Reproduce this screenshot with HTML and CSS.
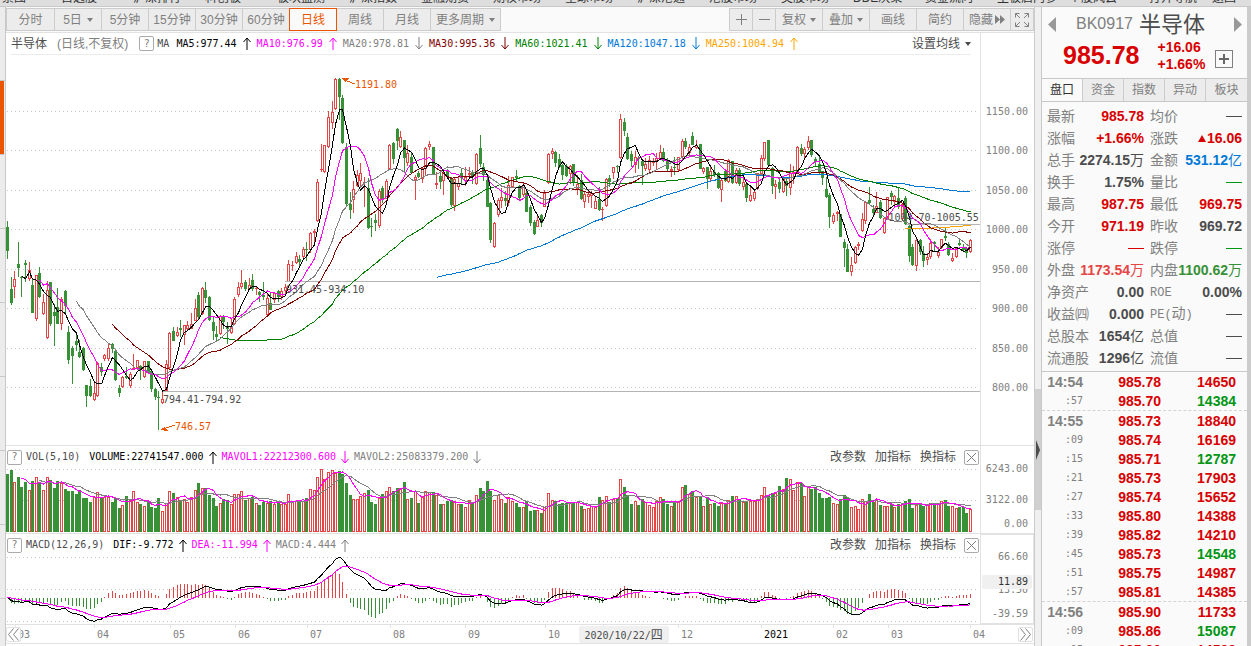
FILE: index.html
```html
<!DOCTYPE html>
<html lang="zh-CN">
<head>
<meta charset="utf-8">
<title>半导体 BK0917 日线</title>
<link rel="stylesheet" href="styles.css">
</head>
<body>
<svg class="defs" aria-hidden="true">
  <symbol id="up" viewBox="0 0 8 13"><path d="M4 13V1M0.5 5L4 1L7.500 5"/></symbol>
  <symbol id="down" viewBox="0 0 8 13"><path d="M4 0V12M0.5 8L4 12L7.500 8"/></symbol>
</svg>
<div class="app">
  <nav class="topnav">
    <a href="#">景图</a><a href="#">自选股</a><a href="#">沪深排行</a><a href="#">科创板</a><a href="#">板块监测</a><a href="#">沪深指数</a><a href="#">金融期货</a><a href="#">期权市场</a><a href="#">全球市场</a><a href="#">沪深港通</a><a href="#">港股市场</a><a href="#">美股市场</a><a href="#">DDE决策</a><a href="#">资金流向</a><a href="#">主板启内参</a><a href="#" class="wide">个股风云</a><a href="#" class="mid">打开导航</a><a href="#">返回</a>
  </nav>
  <div class="work">
    <aside class="rail"><i></i><i class="on"></i><i></i><i></i><i></i><i></i><i></i><i></i><i></i></aside>
    <main class="main">
      <div class="toolbar">
        <div class="group">
          <button>分时</button><button>5日<b class="caret"></b></button><button>5分钟</button><button>15分钟</button><button>30分钟</button><button>60分钟</button><button class="active">日线</button><button>周线</button><button>月线</button><button class="more">更多周期<b class="caret"></b></button>
        </div>
        <div class="group tools">
          <button class="small" aria-label="放大"><svg width="11" height="11"><path d="M0 5.500H11M5.500 0V11"/></svg></button><button class="small" aria-label="缩小"><svg width="11" height="11"><path d="M0 5.500H11"/></svg></button><button>复权<b class="caret"></b></button><button>叠加<b class="caret"></b></button><button>画线</button><button>简约</button><button>隐藏<svg width="10" height="9" class="solid"><path d="M0 0L5 4.500L0 9ZM5 0L10 4.500L5 9Z"/></svg></button><button class="small" aria-label="全屏"><svg width="14" height="14"><path d="M.5 4.500V.5H4.500M.5.5L5 5M9.500.5H13.500V4.500M13.500.5L9 5M.5 9.500V13.500H4.500M.5 13.500L5 9M9.500 13.500H13.500V9.500M13.500 13.500L9 9"/></svg></button>
        </div>
      </div>

      <section class="pane price">
        <div class="plot">
          <header class="legend ruled">
            <span class="cn dark">半导体</span><span class="cn sub">(日线,不复权)</span><button class="box">?</button><span class="dark ma">MA</span>
            <span class="c-black">MA5:977.44</span><svg class="arrow c-black"><use href="#up"/></svg>
            <span class="c-pink">MA10:976.99</span><svg class="arrow c-pink"><use href="#up"/></svg>
            <span class="c-gray">MA20:978.81</span><svg class="arrow c-gray"><use href="#down"/></svg>
            <span class="c-brown">MA30:995.36</span><svg class="arrow c-brown"><use href="#down"/></svg>
            <span class="c-green">MA60:1021.41</span><svg class="arrow c-green"><use href="#down"/></svg>
            <span class="c-blue">MA120:1047.18</span><svg class="arrow c-blue"><use href="#down"/></svg>
            <span class="c-gold">MA250:1004.94</span><svg class="arrow c-gold"><use href="#up"/></svg>
            <button class="link">设置均线<b class="caret"></b></button>
          </header>
          <div class="canvas">
            <svg id="price" viewBox="6 55 974 390" preserveAspectRatio="none"></svg>
            <span class="note hot" style="left:35.83%;top:6.2%">1191.80</span>
            <span class="note hot" style="left:17.35%;top:93.9%">746.57</span>
            <span class="note" style="left:28.75%;top:58.8%">931.45-934.10</span>
            <span class="note" style="left:16.12%;top:87%">794.41-794.92</span>
            <span class="note" style="left:90.6%;top:40.3%">1004.70-1005.55</span>
          </div>
        </div>
        <div class="axis price-axis"><span>1150.00</span><span>1100.00</span><span>1050.00</span><span>1000.00</span><span>950.00</span><span>900.00</span><span>850.00</span><span>800.00</span></div>
      </section>

      <section class="pane volume">
        <div class="plot">
          <header class="legend tight">
            <button class="box">?</button><span class="dark name">VOL(5,10)</span>
            <span class="c-black">VOLUME:22741547.000</span><svg class="arrow c-black"><use href="#up"/></svg>
            <span class="c-pink">MAVOL1:22212300.600</span><svg class="arrow c-pink"><use href="#down"/></svg>
            <span class="c-gray">MAVOL2:25083379.200</span><svg class="arrow c-gray"><use href="#down"/></svg>
            <span class="acts"><button>改参数</button><button>加指标</button><button>换指标</button><button class="box" aria-label="关闭"><svg width="9" height="9"><path d="M0 0L9 9M9 0L0 9"/></svg></button></span>
          </header>
          <div class="canvas"><svg id="volume" viewBox="6 468 974 65" preserveAspectRatio="none"></svg></div>
        </div>
        <div class="axis vol-axis"><span>6243.00</span><span>3122.00</span><span>0.00</span></div>
      </section>

      <section class="pane macd">
        <div class="plot">
          <header class="legend tight">
            <button class="box">?</button><span class="dark name">MACD(12,26,9)</span>
            <span class="c-black">DIF:-9.772</span><svg class="arrow c-black"><use href="#up"/></svg>
            <span class="c-pink">DEA:-11.994</span><svg class="arrow c-pink"><use href="#up"/></svg>
            <span class="c-gray">MACD:4.444</span><svg class="arrow c-gray"><use href="#up"/></svg>
            <span class="acts"><button>改参数</button><button>加指标</button><button>换指标</button><button class="box" aria-label="关闭"><svg width="9" height="9"><path d="M0 0L9 9M9 0L0 9"/></svg></button></span>
          </header>
          <div class="canvas"><svg id="macd" viewBox="6 556 974 68" preserveAspectRatio="none"></svg></div>
        </div>
        <div class="axis macd-axis"><span>66.60</span><span>13.50</span><span>-39.59</span><em>11.89</em></div>
      </section>

      <div class="time">
        <div class="months"><span class="first">03</span><span>04</span><span>05</span><span>06</span><span>07</span><span>08</span><span>09</span><span>10</span><span></span><span>12</span><span class="year">2021</span><span>02</span><span>03</span><span>04</span></div>
        <button class="box prev" aria-label="向前"><svg width="11" height="13"><path d="M5.500 .5L.5 6.500L5.500 12.500M10.500 .5L5.500 6.500L10.500 12.500"/></svg></button>
        <span class="cursor">2020/10/22/<b>四</b></span>
        <button class="box next" aria-label="向后"><svg width="11" height="13"><path d="M.5 .5L5.500 6.500L.5 12.500M5.500 .5L10.500 6.500L5.500 12.500"/></svg></button>
      </div>
    </main>

    <div class="splitter"><div class="thumb"><svg width="5" height="20"><path d="M1 0L5 10L1 20Z"/></svg></div></div>

    <aside class="quote">
      <div class="head">
        <div class="title">
          <button aria-label="上一个"><svg width="8" height="15"><path d="M8 0V15L0 7.500Z"/></svg></button>
          <span class="code">BK0917</span><span class="stock">半导体</span>
          <button aria-label="下一个" class="right"><svg width="8" height="15"><path d="M0 0V15L8 7.500Z"/></svg></button>
        </div>
        <div class="last"><strong>985.78</strong><span class="chg"><span>+16.06</span><span>+1.66%</span></span><button class="add" aria-label="加自选"><svg width="10" height="10"><path d="M0 5H10M5 0V10"/></svg></button></div>
      </div>
      <div class="tabs"><button class="sel">盘口</button><button>资金</button><button>指数</button><button>异动</button><button>板块</button></div>
      <table class="stats">
        <colgroup><col class="l1"><col class="v1"><col class="l2"><col class="v2"></colgroup>
        <tr><th>最新</th><td class="r">985.78</td><th>均价</th><td><i class="dash"></i></td></tr>
        <tr><th>涨幅</th><td class="r">+1.66%</td><th>涨跌</th><td class="r"><i class="tri"></i>16.06</td></tr>
        <tr><th>总手</th><td>2274.15<s>万</s></td><th>金额</th><td class="b">531.12<s>亿</s></td></tr>
        <tr><th>换手</th><td>1.75%</td><th>量比</th><td class="g"><i class="dash"></i></td></tr>
        <tr><th>最高</th><td class="r">987.75</td><th>最低</th><td class="r">969.75</td></tr>
        <tr><th>今开</th><td class="r">971.19</td><th>昨收</th><td>969.72</td></tr>
        <tr><th>涨停</th><td class="r"><i class="dash"></i></td><th>跌停</th><td class="g"><i class="dash"></i></td></tr>
        <tr><th>外盘</th><td class="lr">1173.54<s>万</s></td><th>内盘</th><td class="lg">1100.62<s>万</s></td></tr>
        <tr><th>净资产</th><td>0.00</td><th><span class="en">ROE</span></th><td>0.00%</td></tr>
        <tr><th>收益㈣</th><td>0.000</td><th><span class="en">PE(</span>动<span class="en">)</span></th><td><i class="dash"></i></td></tr>
        <tr><th>总股本</th><td>1654<s>亿</s></td><th>总值</th><td><i class="dash"></i></td></tr>
        <tr><th>流通股</th><td>1296<s>亿</s></td><th>流值</th><td><i class="dash"></i></td></tr>
      </table>
      <div class="ticks">
        <table>
          <tbody>
          <tr><th>14:54</th><td>985.78</td><td>14650</td></tr>
          <tr><th class="s">:57</th><td>985.70</td><td class="g">14384</td></tr>
          </tbody>
        </table>
        <table>
          <tbody>
          <tr><th>14:55</th><td>985.73</td><td>18840</td></tr>
          <tr><th class="s">:09</th><td>985.74</td><td>16169</td></tr>
          <tr><th class="s">:15</th><td>985.71</td><td class="g">12787</td></tr>
          <tr><th class="s">:21</th><td>985.73</td><td>17903</td></tr>
          <tr><th class="s">:27</th><td>985.74</td><td>15652</td></tr>
          <tr><th class="s">:33</th><td>985.80</td><td>14388</td></tr>
          <tr><th class="s">:39</th><td>985.82</td><td>14210</td></tr>
          <tr><th class="s">:45</th><td>985.73</td><td class="g">14548</td></tr>
          <tr><th class="s">:51</th><td>985.75</td><td>14987</td></tr>
          <tr><th class="s">:57</th><td>985.81</td><td>14385</td></tr>
          </tbody>
        </table>
        <table>
          <tbody>
          <tr><th>14:56</th><td>985.90</td><td>11733</td></tr>
          <tr><th class="s">:09</th><td>985.86</td><td class="g">15087</td></tr>
          <tr><th class="s">:15</th><td>985.80</td><td>14588</td></tr>
          </tbody>
        </table>
      </div>
    </aside>
    <div class="edge"></div>
  </div>
</div>
<script src="chart.js"></script>
</body>
</html>
```
FILE: styles.css
```css
* { box-sizing: border-box; }
body { margin: 0; background: #fafafa; color: #4c4c4c; font: 12px/16px "Liberation Sans", "Noto Sans CJK SC", sans-serif; }
button { font: inherit; color: inherit; background: none; border: 0; padding: 0; margin: 0; line-height: 16px; }
a { color: inherit; text-decoration: none; }
svg { display: block; fill: none; stroke: currentColor; }
.defs { position: absolute; width: 0; height: 0; }
.app { height: 100vh; display: flex; flex-direction: column; overflow: hidden; }

.topnav { display: flex; align-items: flex-end; height: 7px; overflow: hidden; background: #dedede; border-bottom: 1px solid #c8c8c8; padding-left: 2px; flex: none; }
.topnav a { flex: 0 0 72px; line-height: 16px; white-space: nowrap; color: #333; }
.topnav a:first-child { flex-basis: 59px; }
.topnav .wide { flex-basis: 80px; }
.topnav .mid { flex-basis: 63px; }
.work { flex: 1; min-height: 0; display: grid; grid-template-columns: 6px minmax(0, 1fr) 6px 206px 4px; }

.rail { background: #ececec; border-right: 1px solid #c8c8c8; overflow: hidden; }
.rail i { display: block; height: 74px; border-bottom: 1px solid #c8c8c8; }
.rail .on { background: #eb5500; margin-right: 1px; }

.main { display: flex; flex-direction: column; min-width: 0; background: #fff; border-right: 1px solid #ccc; padding-bottom: 2px; }
.toolbar { display: flex; justify-content: space-between; align-items: center; height: 26px; background: #fafafa; border-bottom: 1px solid #e2e2e2; flex: none; }
.group { display: flex; height: 23px; border-right: 1px solid #ccc; }
.group button { display: flex; align-items: center; justify-content: center; gap: 5px; width: 47px; border: solid #ccc; border-width: 1px 0 1px 1px; background: #ececec; color: #808080; white-space: nowrap; }
.group button:first-child { width: 48px; }
.group .active { width: 48px; margin-right: -1px; z-index: 1; border: 1px solid #eb5500; background: #fafafa; color: #eb5500; }
.group .more { width: 70px; }
.group .small, .group .small:first-child { width: 23px; }
.tools button { gap: 4px; }
.tools .solid { margin-left: -2px; }
.solid { fill: currentColor; stroke: none; }
.caret { display: inline-block; border: solid transparent; border-width: 4px 3px 0; border-top-color: currentColor; }

.pane { display: flex; border-bottom: 1px solid #e2e2e2; flex: none; }
.price { flex: 1; min-height: 0; }
.volume { height: 88px; }
.macd { height: 91px; }
.plot { flex: 1; min-width: 0; display: flex; flex-direction: column; }
.canvas { flex: 1; min-height: 0; position: relative; }
.canvas svg { position: absolute; width: 100%; height: 100%; shape-rendering: crispEdges; }
.note { position: absolute; font: 10px/12px "DejaVu Sans Mono", monospace; color: #4c4c4c; white-space: nowrap; }
.note.hot { color: #eb5500; }

.legend { display: flex; align-items: center; gap: 6px; height: 22px; flex: none; font: 10px/16px "DejaVu Sans Mono", monospace; white-space: nowrap; }
.ruled { margin: 0 9px 0 5px; border-bottom: 1px solid #ececec; }
.tight { gap: 5px; padding-left: 1px; padding-right: 1px; }
.legend .box { font: 10px/12px "DejaVu Sans Mono", monospace; }
.legend .cn, .acts, .link { font: 12px/16px "Liberation Sans", "Noto Sans CJK SC", sans-serif; }
.sub { margin-left: 4px; margin-right: 5px; color: #808080; }
.legend .ma { margin-left: -3px; margin-right: 1px; }
.tight .name { margin: 0 4px 0 -1px; }
.dark { color: #4c4c4c; }
.arrow { width: 8px; height: 13px; flex: none; }
.link { margin-left: auto; display: flex; align-items: center; gap: 5px; }
.box { display: flex; align-items: center; justify-content: center; width: 15px; height: 15px; border: 1px solid #aaa; border-radius: 2px; color: #808080; flex: none; }
.acts { margin-left: auto; display: flex; align-items: center; gap: 9px; }
.acts .box { margin-left: -1px; }
.c-black { color: #000; }
.c-pink { color: #f0f; }
.c-gray { color: #808080; }
.c-brown { color: #800000; }
.c-green { color: #008000; }
.c-blue { color: #0078d7; }
.c-gold { color: #ffa500; }

.axis { width: 54px; border-left: 1px solid #e2e2e2; display: flex; flex-direction: column; justify-content: space-between; text-align: right; padding-right: 6px; font: 10px/12px "DejaVu Sans Mono", monospace; color: #808080; flex: none; position: relative; }
.price-axis { padding-top: 73px; padding-bottom: 51px; }
.vol-axis { padding-top: 17px; padding-bottom: 3px; }
.vol-axis span:nth-child(2) { padding-top: 7px; }
.macd-axis { border: 1px solid #e2e2e2; padding-top: 16px; padding-bottom: 3px; padding-right: 5px; }
.macd-axis span:nth-child(2) { padding-top: 8px; }
.macd-axis em { position: absolute; left: 1px; right: 1px; top: 40px; height: 14px; line-height: 14px; padding-right: 4px; background: #f0f0f0; border-radius: 2px; font-style: normal; color: #333; }

.time { position: relative; height: 19px; border-bottom: 1px solid #e2e2e2; font: 10px/20px "DejaVu Sans Mono", monospace; color: #808080; flex: none; }
.months { display: grid; grid-template-columns: 9fr 79fr 76fr 65fr 72fr 83fr 75fr 80fr 58fr 75fr 83fr 72fr 55fr 82fr 64fr; }
.months .first { grid-column: 2; }
.months span { padding-left: 3px; background: linear-gradient(#e2e2e2, #e2e2e2) no-repeat 0 0 / 1px 3px; }
.months .year { color: #000; }
.time .box { position: absolute; top: 2px; background: #fff; border-color: #e2e2e2; }
.prev { left: 0; }
.next { right: 1px; }
.cursor { position: absolute; top: 1px; left: 55.7%; height: 17px; width: 90px; line-height: 17px; text-align: center; background: #f0f0f0; border-radius: 2px; color: #4c4c4c; }
.cursor b { font: 12px/16px "Noto Sans CJK SC", sans-serif; }

.splitter { background: #f0f0f0; padding-top: 382px; }
.thumb { height: 121px; background: #d0d0d0; display: flex; align-items: center; color: #4c4c4c; }
.thumb svg { fill: currentColor; stroke: none; }

.quote { border-left: 1px solid #c8c8c8; background: #fafafa; overflow: hidden; }
.edge { background: #ccc; }
.head { height: 71px; }
.title { display: flex; align-items: center; height: 34px; padding: 0 5px 0 6px; white-space: nowrap; color: #808080; }
.title button { color: #999; }
.title svg { fill: currentColor; stroke: none; }
.title .right { margin-left: auto; }
.code { font-size: 16px; margin-left: 20px; }
.stock { font: 22px/32px "Noto Sans CJK SC", sans-serif; color: #4c4c4c; margin-left: 6px; padding-bottom: 4px; }
.last { display: flex; align-items: center; color: #d80000; padding-left: 21px; height: 28px; }
.last strong { font-size: 25px; line-height: 28px; }
.chg { display: flex; flex-direction: column; font: bold 14px/17px "Liberation Sans", sans-serif; margin-left: 18px; margin-top: 2px; }
.add { width: 18px; height: 18px; border: 1px solid #808080; display: flex; align-items: center; justify-content: center; color: #666; margin-left: 10px; margin-top: 8px; }
.add svg { stroke-width: 2; }
.tabs { display: grid; grid-template-columns: repeat(5, 1fr); height: 24px; border: solid #c8c8c8; border-width: 1px 0; margin-bottom: 3px; }
.tabs button { background: #ececec; color: #808080; border-right: 1px solid #ccc; }
.tabs button:last-child { border-right: 0; }
.tabs .sel { background: #fafafa; color: #333; }

table { border-collapse: collapse; table-layout: fixed; width: 100%; font: bold 14px/18px "Liberation Sans", "Noto Sans CJK SC", sans-serif; }
td, th { padding: 0; white-space: nowrap; }
td { text-align: right; }
.stats { width: 195px; margin-left: 5px; }
.l1 { width: 29px; }
.v1 { width: 68px; }
.l2 { width: 33px; }
.v2 { width: 65px; }
.stats tr { height: 22px; }
.stats th { font-weight: normal; text-align: left; color: #808080; }
.stats th:nth-child(3) { padding-left: 6px; }
.stats s { text-decoration: none; font-weight: normal; }
.en { font: 12px/18px "Liberation Mono", monospace; }
.r { color: #d80000; }
.g { color: #009614; }
.b { color: #0078d7; }
.lr { color: #e64545; }
.lg { color: #379137; }
.dash { display: inline-block; width: 16px; height: 1px; background: currentColor; vertical-align: 4px; }
.tri { display: inline-block; border: solid transparent; border-width: 0 4px 7px; border-bottom-color: currentColor; margin-right: 1px; vertical-align: 1px; }
.ticks { margin-top: 2px; border-top: 1px solid #c8c8c8; }
.ticks table { border-collapse: separate; border-spacing: 0; border-bottom: 1px dashed #d4d4d4; }
.ticks tr { height: 19px; }
.ticks th { width: 41px; text-align: right; color: #808080; }
.ticks .s { font: 10px/18px "DejaVu Sans Mono", monospace; }
.ticks td { color: #d80000; width: 78px; }
.ticks td:last-child { width: auto; padding-right: 11px; }
.ticks .g { color: #009614; }
```
FILE: chart.js
```js
// Each candle: high, body top, body bottom, low (plot y), direction.
const candles = `221 227 251 259 g;277 289 303 305 g;271 279 287 298 r;242 264 268 277 g;276 277 278 297 g;260 263 265 282 g;262 270 279 281 r;278 285 313 313 g;275 275 319 321 r;267 273 297 298 g
294 302 314 315 r;281 290 338 339 r;282 282 324 326 g;304 312 316 346 g;288 307 324 324 g;297 299 324 330 r;290 291 306 314 g;326 332 360 364 g;346 348 356 384 g;333 341 345 351 g
340 352 357 358 g;347 348 370 371 g;385 385 396 407 g;379 386 396 397 g;383 393 400 401 r;362 363 396 397 r;363 367 372 376 g;354 355 359 361 r;344 348 359 361 r;343 344 349 353 g
350 351 380 381 g;385 388 393 397 g;376 377 387 388 r;367 376 378 379 g;372 374 386 388 r;354 368 369 370 r;360 360 368 369 r;365 366 369 380 g;361 361 377 378 r;361 361 372 373 g
370 371 389 392 g;388 389 397 400 g;391 397 398 430 g;391 399 403 404 r;360 364 391 392 r;332 333 368 369 r;327 331 341 341 g;327 332 336 337 r;320 328 330 337 g;325 325 335 345 r
321 325 329 330 r;313 324 329 329 r;299 308 321 321 r;292 295 317 320 g;287 288 314 315 r;282 290 298 303 g;296 297 320 321 g;317 322 331 340 g;326 334 337 342 g;315 316 334 335 r
315 316 322 329 g;322 326 329 344 g;319 327 333 334 r;297 299 324 325 r;282 287 295 297 r;270 283 287 289 r;280 282 289 291 g;278 285 289 290 r;274 280 289 291 g;286 288 289 295 r
291 292 295 302 g;282 295 297 300 g;294 298 315 317 r;292 303 310 310 g;292 293 300 303 r;290 291 297 302 g;288 291 297 300 r;284 287 291 295 r;260 264 282 282 r;261 265 266 271 r
252 256 263 264 r;255 259 262 266 g;247 249 257 260 r;242 249 250 261 g;232 233 250 253 r;229 231 233 244 r;179 182 221 222 r;144 169 170 172 r;145 145 172 173 r;111 117 147 148 r
101 112 123 129 r;78 79 109 110 r;78 79 97 120 g;95 98 143 144 g;143 147 204 206 g;192 204 210 219 g;181 189 200 213 r;170 175 186 187 r;163 173 181 186 r;177 182 183 207 r
178 188 228 229 g;218 226 227 237 g;214 220 223 231 g;189 191 226 228 r;186 188 199 203 g;179 181 199 199 r;144 145 169 170 r;142 143 159 164 g;128 129 141 150 g;131 137 147 148 r
140 140 158 172 g;145 153 163 166 r;152 157 173 174 g;175 177 180 200 r;171 173 177 178 g;167 168 179 183 r;147 148 169 175 r;141 144 147 150 r;147 147 175 175 g;172 183 185 189 r
172 176 182 189 g;170 173 181 195 r;169 171 176 177 g;177 178 205 207 g;177 179 206 211 r;176 183 187 190 r;168 173 178 184 g;167 177 181 186 r;167 173 175 177 r;170 173 176 184 g
153 154 184 185 r;135 148 164 167 g;163 167 175 181 g;178 180 207 207 g;202 203 240 243 g;222 223 247 248 r;198 200 215 217 r;188 197 201 208 r;191 198 201 206 g;176 185 203 206 r
177 177 187 188 r;170 176 178 181 g;185 186 198 200 g;183 185 195 197 r;189 193 212 212 g;205 207 223 226 g;220 222 234 235 g;214 220 227 227 r;214 215 223 227 g;190 193 207 207 r
153 154 183 184 r;148 151 154 159 r;151 152 163 167 g;154 159 167 168 g;164 165 175 180 g;164 166 176 177 g;165 166 174 184 r;164 164 183 186 g;175 184 189 195 r;174 180 199 200 g
192 194 202 208 r;190 194 197 203 r;191 193 196 208 r;196 201 209 209 r;187 199 210 211 g;207 209 210 221 r;178 179 206 207 r;175 178 182 187 g;167 167 173 179 r;165 166 167 173 g
114 119 158 159 r;118 122 131 136 g;133 137 159 160 g;151 154 161 167 g;151 157 165 173 r;156 158 159 169 g;160 161 166 185 g;158 164 169 171 r;156 160 170 174 r;158 161 163 166 r
153 158 161 169 r;145 152 159 160 r;148 152 161 162 g;158 161 169 171 g;166 169 171 177 r;157 167 168 175 g;157 157 170 171 r;139 141 157 159 r;138 141 147 149 g;144 147 153 155 r
132 136 145 145 g;140 145 148 149 r;144 144 169 169 g;167 168 172 174 r;167 167 179 189 g;165 171 179 181 r;165 172 175 177 g;172 173 188 189 g;179 180 190 202 r;170 171 181 182 g
159 160 182 183 r;161 161 183 184 g;168 170 183 184 r;168 170 184 186 g;177 182 187 190 r;183 184 198 202 g;186 195 201 202 r;189 192 199 201 r;173 173 189 190 r;155 158 174 176 r
142 142 159 161 r;140 140 165 167 g;167 168 186 194 g;180 184 187 199 r;177 182 189 193 g;177 178 192 193 r;179 181 186 196 g;164 173 188 195 r;166 172 174 184 r;146 147 173 174 r
144 148 154 156 g;147 149 154 160 r;136 141 148 150 r;140 140 155 157 g;157 159 162 167 g;155 164 172 174 g;171 171 178 185 g;177 189 197 198 g;193 195 217 228 g;213 215 222 224 r
211 212 214 221 r;214 214 237 237 g;239 242 248 267 g;244 249 272 272 g;257 265 272 276 r;246 247 263 264 r;242 244 246 250 r;213 219 231 232 r;202 202 221 224 r;187 200 203 204 g
205 209 213 216 g;192 206 213 213 r;200 202 218 219 g;217 218 233 234 r;197 197 219 220 r;191 193 197 205 g;195 196 202 207 r;188 198 207 209 g;203 204 219 220 r;196 198 224 225 g
224 226 256 262 g;244 247 265 266 g;239 240 266 271 r;239 240 252 255 g;246 253 261 267 g;253 257 260 265 r;239 243 257 259 r;241 242 244 252 g;247 252 256 258 r;239 239 248 249 r
228 236 238 241 g;242 244 255 256 g;253 258 261 262 r;247 248 257 258 r;238 243 245 246 g;244 247 250 251 g;247 248 253 258 g;239 240 252 253 r`
  .split(/[;\n]/).map(row => {
    const p = row.trim().split(' ');
    return { hi: +p[0], top: +p[1], bot: +p[2], lo: +p[3], up: p[4] === 'r' };
  });

const volumes = [
  58,62,50,55,45,50,42,51,55,50, 42,55,52,44,51,49,43,41,41,38, 42,34,34,30,35,40,35,35,35,30,
  34,24,27,36,32,41,30,28,26,30, 25,24,34,21,29,41,39,35,32,33, 30,35,42,49,44,44,37,34,26,29,
  33,32,28,38,38,41,32,34,35,29, 27,30,29,31,28,29,28,28,38,30, 31,31,31,34,43,42,55,63,53,60,
  62,59,61,58,49,37,33,33,36,39, 42,30,28,34,38,41,45,41,44,44, 50,33,34,41,29,36,41,40,40,37,
  28,28,31,32,31,28,28,25,32,30, 37,44,41,51,41,32,37,33,29,35, 31,29,25,25,30,21,22,22,19,25,
  39,32,31,28,29,29,30,29,30,26, 23,24,26,26,35,32,36,30,33,34, 53,45,37,28,31,27,33,30,27,25,
  31,35,33,28,26,31,31,45,47,38, 41,35,36,26,35,28,29,26,29,28, 32,36,36,32,30,31,31,31,33,37,
  45,37,39,39,46,43,54,53,42,50, 49,36,45,43,45,39,34,34,35,29, 28,33,37,35,25,26,23,33,31,38,
  30,33,27,26,26,28,25,28,28,31, 33,24,27,28,26,27,29,27,29,31, 32,26,26,24,25,25,19,23
];

const RED = '#e64545', GREEN = '#379137';
const xAt = i => Math.floor(7.5 + 3.607 * i) + 0.5;
const rect = (x, y, w, h, attrs) => `<rect x="${x}" y="${y}" width="${w}" height="${h}" ${attrs}/>`;
const seg = (x1, y1, x2, y2, c, extra = '') => `<path d="M${x1} ${y1}L${x2} ${y2}" stroke="${c}" ${extra}/>`;
const dotted = y => seg(7, y, 978, y, '#c8c8c8', 'stroke-dasharray="1 3"');
const solid = c => `fill="${c}" stroke="none"`;
const line = (values, color) => {
  const pts = values.map((v, i) => v === null ? '' : `${xAt(i)},${v.toFixed(1)}`).filter(Boolean);
  return `<polyline points="${pts.join(' ')}" stroke="${color}"/>`;
};
const average = (src, n) => src.map((_, i) =>
  i < n - 1 ? null : src.slice(i - n + 1, i + 1).reduce((a, b) => a + b, 0) / n);
const ema = (src, n) => {
  let e = src[0];
  return src.map(v => (e += (v - e) * 2 / (n + 1)));
};

// Price
let out = [111.5, 150.5, 190.5, 229.5, 269.5, 308.5, 348.5, 387.5].map(dotted).join('');
candles.forEach((c, i) => {
  const x = xAt(i), color = c.up ? RED : GREEN;
  if (c.up) {
    const h = Math.max(1, c.bot - c.top);
    out += seg(x, c.hi, x, c.top, color) + seg(x, c.bot, x, c.lo, color);
    out += h < 3 ? rect(x - 1.5, c.top, 3, h, solid(color))
                 : rect(x - 1, c.top + 0.5, 2, h - 1, `fill="#fff" stroke="${color}"`);
  } else {
    out += seg(x, c.hi, x, c.lo, color) + rect(x - 1.5, c.top, 3, Math.max(1, c.bot - c.top), solid(color));
  }
});
out += seg(285, 281.5, 980, 281.5, '#b4b4b4') + seg(162, 391.5, 980, 391.5, '#b4b4b4') + seg(906, 224.5, 980, 224.5, '#b4b4b4');
const closes = candles.map(c => c.up ? c.top : c.bot);
[[250, '#ffa500'], [120, '#0078d7'], [60, '#008000'], [30, '#800000'], [20, '#808080'], [10, '#ff00ff'], [5, '#000']]
  .forEach(([n, color]) => { out += line(average(closes, n), color); });
out += seg(343, 79.5, 355, 84, '#eb5500') + `<path d="M341 78L349 78L345 82Z" ${solid('#eb5500')}/>`;
out += seg(163, 429, 175, 425, '#eb5500') + `<path d="M160 430L165 427L168 431Z" ${solid('#eb5500')}/>`;
document.getElementById('price').innerHTML = out;

// Volume
out = dotted(469.5) + dotted(500.5);
volumes.forEach((v, i) => {
  const x = xAt(i);
  out += candles[i].up ? rect(x - 1, 532.5 - v, 2, v - 1, `fill="#fff" stroke="${RED}"`)
                       : rect(x - 1.5, 532 - v, 3, v, solid(GREEN));
});
out += line(average(volumes, 10).map(v => v && 532 - v), '#808080') + line(average(volumes, 5).map(v => v && 532 - v), '#ff00ff');
document.getElementById('volume').innerHTML = out;

// MACD
const prices = closes.map(y => 1150 - (y - 111.3) / 0.7886);
const slow = ema(prices, 26);
const dif = ema(prices, 12).map((v, i) => v - slow[i]);
const dea = ema(dif, 9);
const toY = v => 597.5 - v * 0.6026;
out = [557.5, 589.5, 621.5].map(dotted).join('');
dif.forEach((v, i) => {
  const h = (v - dea[i]) * 2;
  out += seg(xAt(i), 597.5, xAt(i), toY(h) + (h > 0 ? -0.5 : 0.5), h > 0 ? RED : GREEN);
});
out += line(dif.map(toY), '#000') + line(dea.map(toY), '#ff00ff');
document.getElementById('macd').innerHTML = out;
```
